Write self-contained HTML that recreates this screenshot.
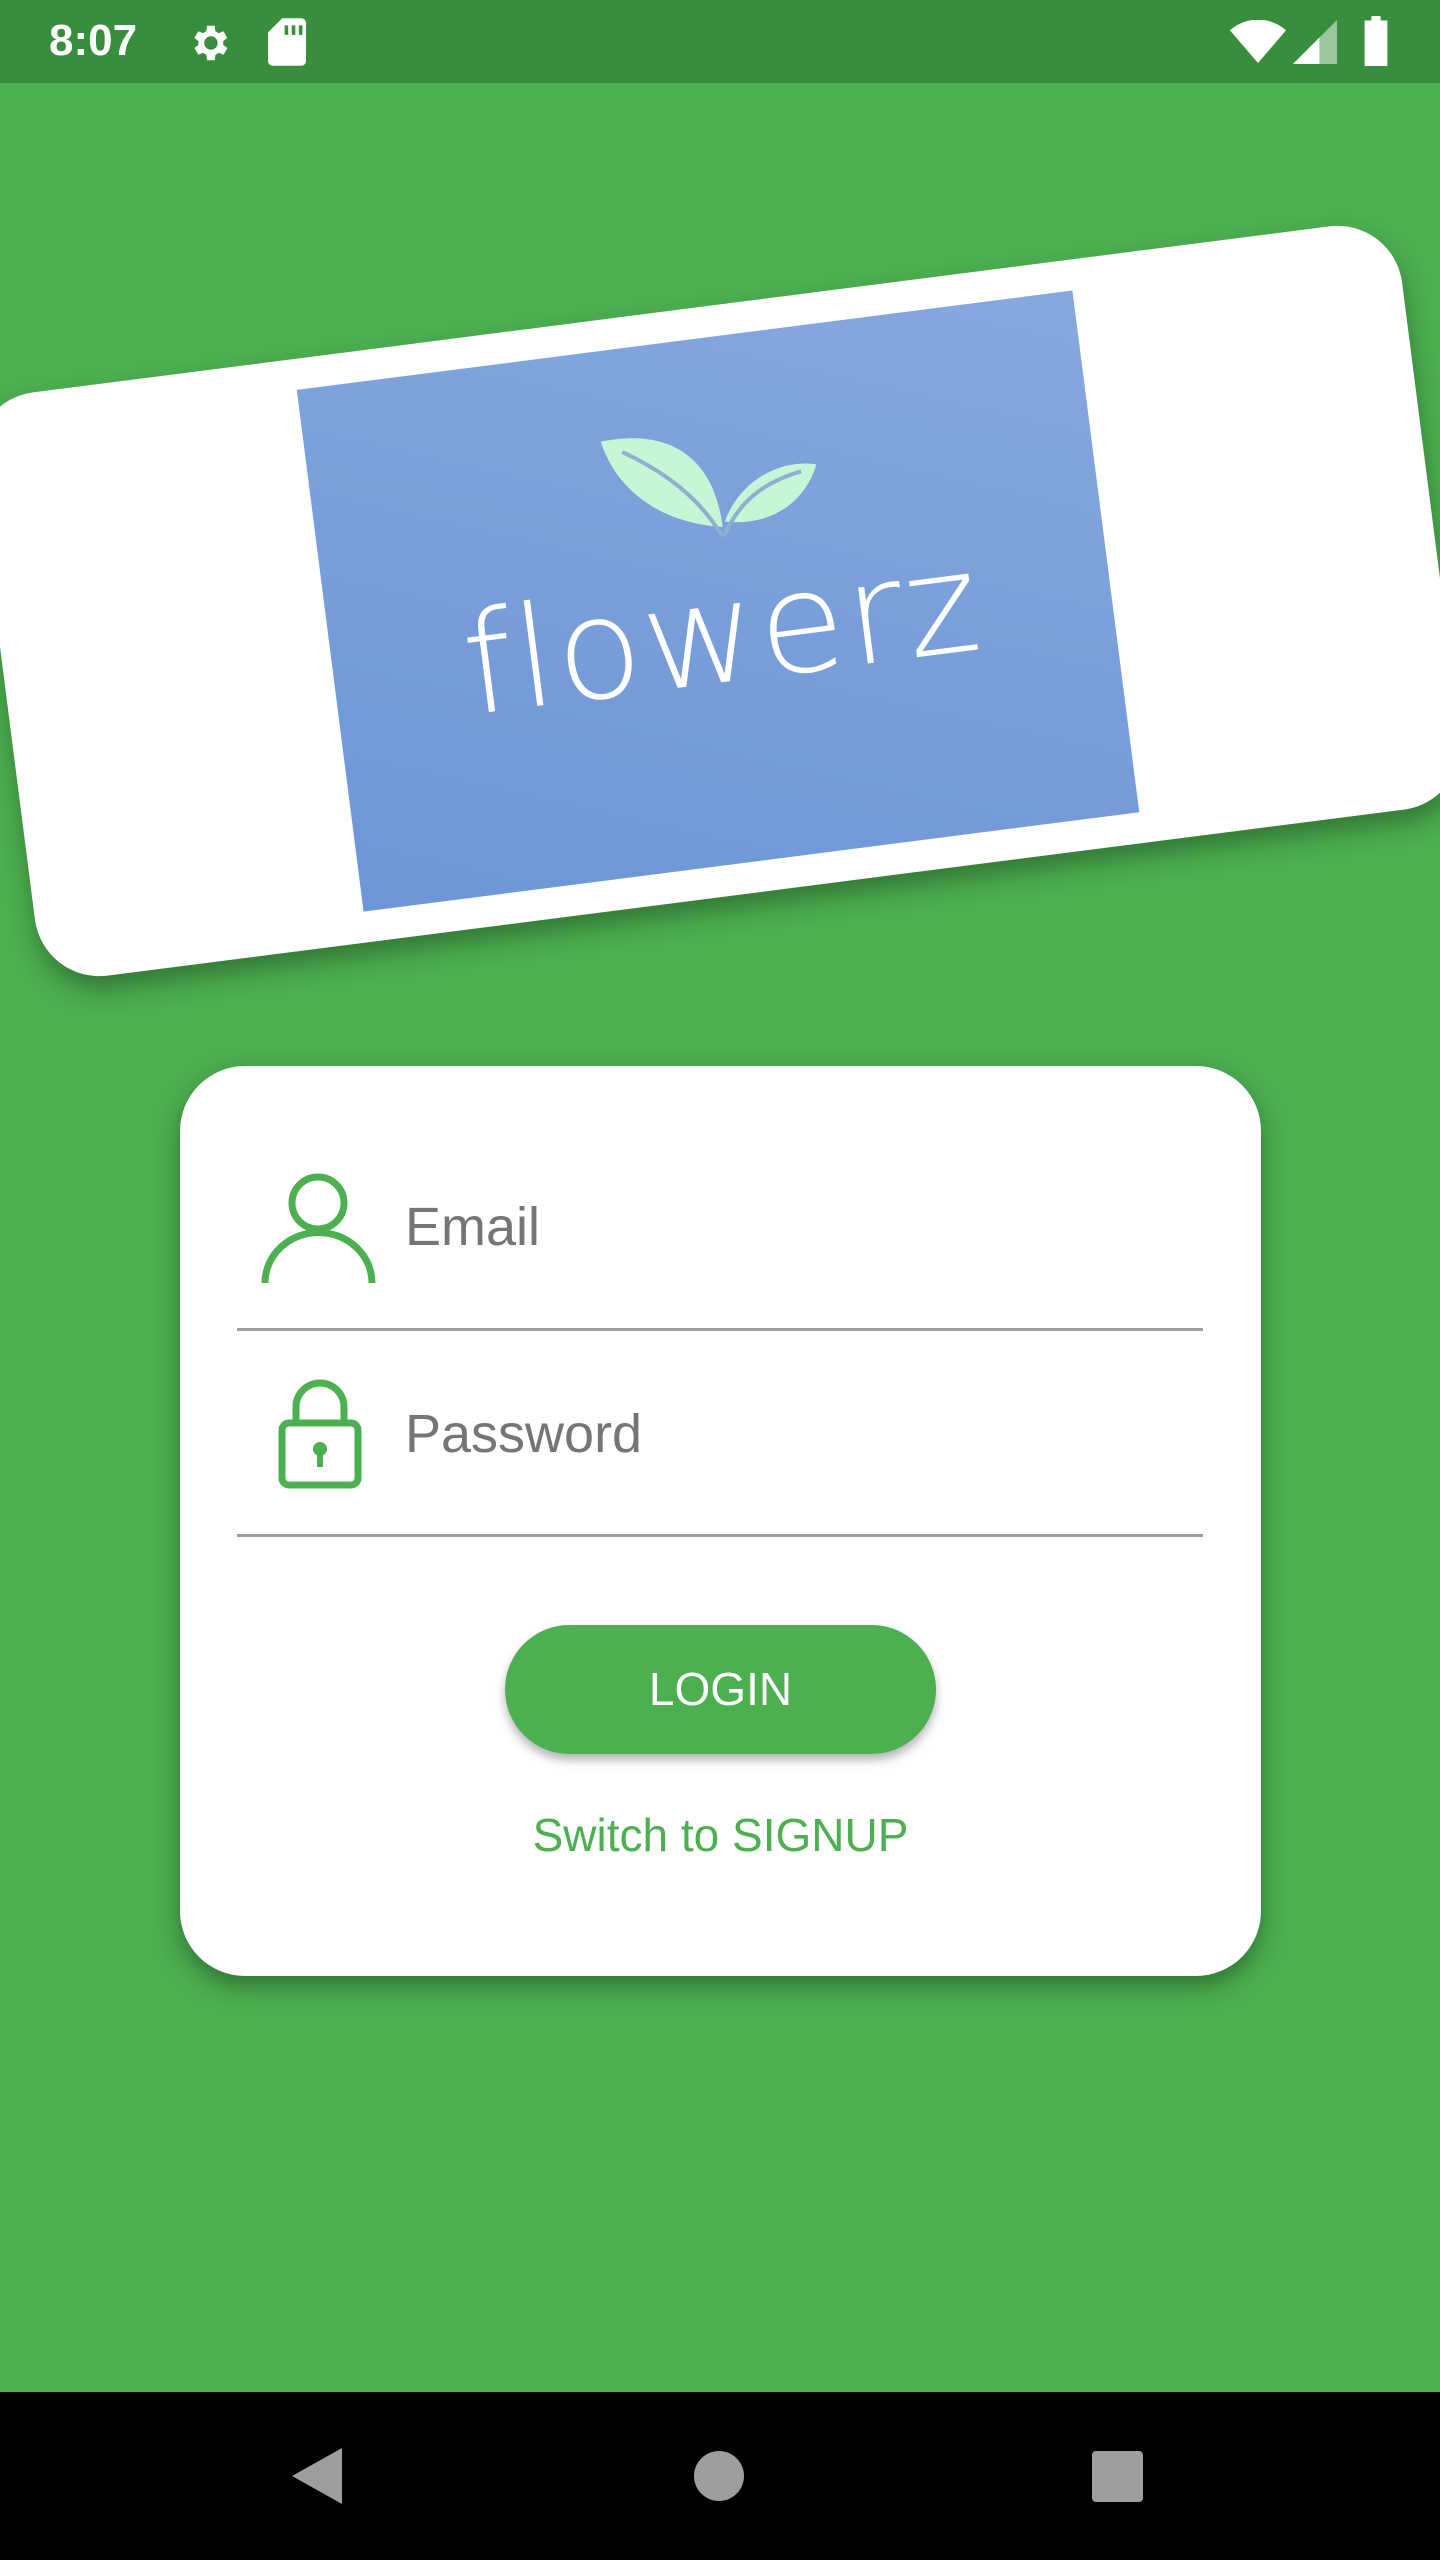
<!DOCTYPE html>
<html><head><meta charset="utf-8"><style>
*{margin:0;padding:0;box-sizing:border-box}
body{width:1440px;height:2560px;background:#4CAF50;position:relative;overflow:hidden;font-family:"Liberation Sans",sans-serif}
.status{position:absolute;left:0;top:0;width:1440px;height:83px;background:#388E3C;color:#fff}
.nav{position:absolute;left:0;top:2392px;width:1440px;height:168px;background:#000}
.rot{position:absolute;left:0;top:307px;width:1437px;height:588px;transform:rotate(-7.3deg);background:#fff;border-radius:65px;box-shadow:0 14px 24px rgba(0,0,0,.3)}
.img{position:absolute;left:327px;top:31px;width:782px;height:526px;background:linear-gradient(200deg,#86a8de,#6c96d6)}
.fl{position:absolute;left:0;width:100%;top:215px;text-align:center;color:#fff;font-size:140px;font-weight:normal;letter-spacing:2px;font-family:"DejaVu Sans",sans-serif;font-weight:200}
.card{position:absolute;left:180px;top:1066px;width:1081px;height:910px;background:#fff;border-radius:65px;box-shadow:0 10px 24px rgba(0,0,0,.35)}
.lbl{position:absolute;color:#757575;font-size:54px}
.line{position:absolute;left:57px;width:966px;height:3px;background:#9e9e9e}
.btn{position:absolute;left:325px;top:559px;width:431px;height:129px;background:#4CAF50;border-radius:65px;color:#fff;font-size:46px;text-align:center;line-height:129px;box-shadow:0 6px 10px rgba(0,0,0,.3)}
.sw{position:absolute;left:0;width:100%;top:742px;text-align:center;color:#4CAF50;font-size:46px}
</style></head><body>
<div class="status">
<div style="position:absolute;left:49px;top:16px;font-size:44px;font-weight:bold">8:07</div>
<svg style="position:absolute;left:186px;top:20px" width="46" height="46" viewBox="0 0 24 24"><path fill="#fff" d="M19.4 13a7.5 7.5 0 000-2l2.1-1.6-2-3.5-2.5 1a7 7 0 00-1.7-1L15 3h-4l-.4 2.9a7 7 0 00-1.7 1l-2.5-1-2 3.5L6.5 11a7.5 7.5 0 000 2l-2.1 1.6 2 3.5 2.5-1a7 7 0 001.7 1L11 21h4l.4-2.9a7 7 0 001.7-1l2.5 1 2-3.5zM13 15.5a3.5 3.5 0 110-7 3.5 3.5 0 010 7z"/></svg>
<svg style="position:absolute;left:268px;top:18px" width="38" height="48" viewBox="0 0 16 20"><path fill="#fff" d="M6 0h8a2 2 0 012 2v16a2 2 0 01-2 2H2a2 2 0 01-2-2V6zM7 3v4h1.5V3zm3 0v4h1.5V3zm3 0v4h1.5V3z"/></svg>
<svg style="position:absolute;left:1230px;top:20px" width="56" height="44" viewBox="0 0 24 18"><path fill="#fff" d="M12 18L0 4a18 18 0 0124 0z"/></svg>
<svg style="position:absolute;left:1292px;top:20px" width="46" height="44" viewBox="0 0 20 20"><path fill="#fff" opacity=".5" d="M20 0v20H0z"/><path fill="#fff" d="M12 8v12H0z"/></svg>
<svg style="position:absolute;left:1362px;top:16px" width="28" height="50" viewBox="0 0 12 22"><path fill="#fff" d="M4 0h4v2h3v20H1V2h3z"/></svg>
</div>
<div class="rot"><div class="img">
<svg style="position:absolute;left:290px;top:85px" width="220" height="130" viewBox="0 0 220 130"><path fill="#c6f6d6" d="M5 5C70 0 115 30 115 105 60 95 15 60 5 5z"/><path fill="#c6f6d6" d="M118 100c20-40 65-55 98-45-18 40-58 55-98 45z"/><path d="M25 18c40 25 70 55 88 95M115 115c20-35 50-50 85-55" stroke="#8fb0d0" stroke-width="4" fill="none"/></svg>
<div class="fl">flowerz</div>
</div></div>
<div class="card">
<svg style="position:absolute;left:81px;top:105px" width="115" height="112" viewBox="0 0 115 112"><circle cx="57" cy="32" r="26" fill="none" stroke="#4CAF50" stroke-width="7"/><path d="M4 112a53 50 0 01107 0" fill="none" stroke="#4CAF50" stroke-width="7"/></svg>
<div class="lbl" style="left:225px;top:130px">Email</div>
<div class="line" style="top:262px"></div>
<svg style="position:absolute;left:98px;top:311px" width="84" height="112" viewBox="0 0 84 112"><path d="M18 46V30a24 24 0 0148 0v16" fill="none" stroke="#4CAF50" stroke-width="7"/><rect x="4" y="46" width="76" height="62" rx="7" fill="none" stroke="#4CAF50" stroke-width="7"/><circle cx="42" cy="72" r="7" fill="#4CAF50"/><rect x="39" y="72" width="6" height="18" fill="#4CAF50"/></svg>
<div class="lbl" style="left:225px;top:337px">Password</div>
<div class="line" style="top:468px"></div>
<div class="btn">LOGIN</div>
<div class="sw">Switch to SIGNUP</div>
</div>
<div class="nav">
<svg style="position:absolute;left:290px;top:54px" width="54" height="60" viewBox="0 0 54 60"><path fill="#9e9e9e" d="M52 2v56L2 30z"/></svg>
<div style="position:absolute;left:694px;top:59px;width:50px;height:50px;border-radius:50%;background:#9e9e9e"></div>
<div style="position:absolute;left:1092px;top:59px;width:51px;height:51px;border-radius:4px;background:#9e9e9e"></div>
</div>
</body></html>
